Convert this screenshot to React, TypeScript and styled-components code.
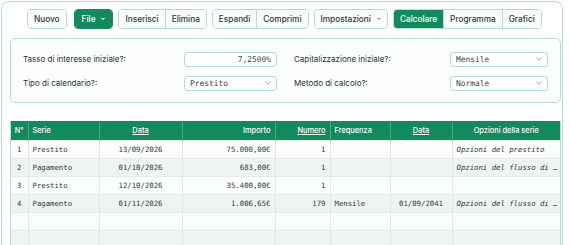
import React from 'react';
import styled, { createGlobalStyle } from 'styled-components';

const GlobalStyle = createGlobalStyle`
  html, body {
    margin: 0;
    padding: 0;
    background: #ffffff;
    font-family: Inter, "Noto Sans", sans-serif;
    color: #26352e;
  }
`;

const GREEN = '#138a5e';
const LINE = '#b7dccd';
const MONO = '"DejaVu Sans Mono", "Liberation Mono", monospace';

const Card = styled.div`
  margin: 1px 0 0 1px;
  width: 562px;
  height: 260px;
  border: 1px solid ${LINE};
  border-radius: 8px;
  background: #ffffff;
  padding: 7px 2px 0 8px;
  box-sizing: border-box;
  overflow: hidden;
`;

const Toolbar = styled.div`
  display: flex;
  align-items: center;
  gap: 5px;
  padding-left: 17px;
  height: 20px;
`;

const Group = styled.div<{ $green?: boolean }>`
  display: flex;
  height: 20px;
  border: 1px solid ${(p) => (p.$green ? GREEN : LINE)};
  border-radius: 4px;
  overflow: hidden;
  box-sizing: border-box;
`;

const Btn = styled.button<{ $active?: boolean }>`
  display: flex;
  align-items: center;
  gap: 6px;
  height: 100%;
  padding: 0 6px;
  border: none;
  border-left: 1px solid ${LINE};
  background: ${(p) => (p.$active ? GREEN : '#fafcfb')};
  color: ${(p) => (p.$active ? '#ffffff' : '#2b3a33')};
  font-family: Inter, "Noto Sans", sans-serif;
  font-size: 8.25px;
  font-weight: 500;
  cursor: pointer;
  &:first-child {
    border-left: none;
  }
`;

const Caret = styled.span<{ $light?: boolean }>`
  width: 0;
  height: 0;
  border-left: 2px solid transparent;
  border-right: 2px solid transparent;
  border-top: 2.5px solid ${(p) => (p.$light ? '#ffffff' : '#8a9690')};
`;

const Settings = styled.div`
  margin-top: 9px;
  width: 551px;
  box-sizing: border-box;
  border: 1px solid ${LINE};
  border-radius: 5px;
  background: #fcfdfd;
  padding: 12px 12px 11px 12px;
  display: grid;
  grid-template-columns: 1fr 1fr;
  column-gap: 17px;
  row-gap: 8px;
`;

const Field = styled.div`
  display: flex;
  align-items: center;
  justify-content: space-between;
  height: 16px;
`;

const Label = styled.span`
  font-size: 8px;
  color: #26352e;
`;

const Control = styled.div<{ $w: number; $right?: boolean }>`
  width: ${(p) => p.$w}px;
  height: 15px;
  box-sizing: border-box;
  border: 1px solid ${LINE};
  border-radius: 3px;
  background: #ffffff;
  display: flex;
  align-items: center;
  justify-content: ${(p) => (p.$right ? 'flex-end' : 'space-between')};
  padding: 0 5px;
  font-family: ${MONO};
  font-size: 7.9px;
  color: #35443d;
`;

const Chevron = () => (
  <svg width="6" height="4" viewBox="0 0 6 4">
    <path d="M0.5 0.8 L3 3.2 L5.5 0.8" fill="none" stroke="#8a9690" strokeWidth="0.8" />
  </svg>
);

const TableWrap = styled.div`
  margin-top: 18px;
  width: 551px;
  border-left: 1px solid ${LINE};
  border-right: 1px solid ${LINE};
  box-sizing: border-box;
`;

const Table = styled.table`
  width: 100%;
  border-collapse: collapse;
  table-layout: fixed;
`;

type Align = 'left' | 'center' | 'right';

const Th = styled.th<{ $align?: Align; $link?: boolean }>`
  background: ${GREEN};
  color: #ffffff;
  height: 19px;
  padding: 0 4px;
  font-family: Inter, "Noto Sans", sans-serif;
  font-size: 7.4px;
  font-weight: 500;
  text-align: ${(p) => p.$align || 'left'};
  text-decoration: ${(p) => (p.$link ? 'underline' : 'none')};
  border-left: 1px solid #4aa883;
  white-space: nowrap;
  &:first-child {
    border-left: none;
  }
`;

const Tr = styled.tr<{ $alt?: boolean }>`
  background: ${(p) => (p.$alt ? '#eef4f1' : '#fbfcfc')};
`;

const Td = styled.td<{ $align?: Align; $italic?: boolean }>`
  height: 17px;
  padding: 0 4px;
  font-family: ${MONO};
  font-size: 7.3px;
  color: #2b3a33;
  text-align: ${(p) => p.$align || 'left'};
  font-style: ${(p) => (p.$italic ? 'italic' : 'normal')};
  border-left: 1px solid #dfe9e5;
  border-top: 1px solid #e2ebe7;
  white-space: nowrap;
  overflow: hidden;
  &:first-child {
    border-left: none;
  }
`;

const rows = [
  { n: '1', serie: 'Prestito', data: '13/09/2026', imp: '75.000,00€', num: '1', freq: '', fine: '', opz: 'Opzioni del prestito' },
  { n: '2', serie: 'Pagamento', data: '01/10/2026', imp: '683,00€', num: '1', freq: '', fine: '', opz: 'Opzioni del flusso di …' },
  { n: '3', serie: 'Prestito', data: '12/10/2026', imp: '35.400,00€', num: '1', freq: '', fine: '', opz: '' },
  { n: '4', serie: 'Pagamento', data: '01/11/2026', imp: '1.006,65€', num: '179', freq: 'Mensile', fine: '01/09/2041', opz: 'Opzioni del flusso di …' },
  { n: '', serie: '', data: '', imp: '', num: '', freq: '', fine: '', opz: '' },
  { n: '', serie: '', data: '', imp: '', num: '', freq: '', fine: '', opz: '' },
];

const App = () => {
  return (
    <>
      <GlobalStyle />
      <Card>
        <Toolbar>
          <Group style={{ marginRight: 2 }}>
            <Btn>Nuovo</Btn>
          </Group>
          <Group $green>
            <Btn $active style={{ padding: '0 7px' }}>
              File <Caret $light />
            </Btn>
          </Group>
          <Group>
            <Btn>Inserisci</Btn>
            <Btn>Elimina</Btn>
          </Group>
          <Group>
            <Btn>Espandi</Btn>
            <Btn>Comprimi</Btn>
          </Group>
          <Group>
            <Btn>
              Impostazioni <Caret />
            </Btn>
          </Group>
          <Group>
            <Btn $active>Calcolare</Btn>
            <Btn>Programma</Btn>
            <Btn>Grafici</Btn>
          </Group>
        </Toolbar>

        <Settings>
          <Field>
            <Label>Tasso di interesse iniziale?:</Label>
            <Control $w={93} $right>7,2500%</Control>
          </Field>
          <Field>
            <Label>Capitalizzazione iniziale?:</Label>
            <Control $w={98}>
              Mensile <Chevron />
            </Control>
          </Field>
          <Field>
            <Label>Tipo di calendario?:</Label>
            <Control $w={93}>
              Prestito <Chevron />
            </Control>
          </Field>
          <Field>
            <Label>Metodo di calcolo?:</Label>
            <Control $w={98}>
              Normale <Chevron />
            </Control>
          </Field>
        </Settings>

        <TableWrap>
          <Table>
            <colgroup>
              <col style={{ width: 17 }} />
              <col style={{ width: 71 }} />
              <col style={{ width: 83 }} />
              <col style={{ width: 93 }} />
              <col style={{ width: 55 }} />
              <col style={{ width: 60 }} />
              <col style={{ width: 62 }} />
              <col />
            </colgroup>
            <thead>
              <tr>
                <Th $align="center" style={{ padding: 0 }}>N°</Th>
                <Th>Serie</Th>
                <Th $align="center" $link>Data</Th>
                <Th $align="right">Importo</Th>
                <Th $align="right" $link>Numero</Th>
                <Th>Frequenza</Th>
                <Th $align="center" $link>Data</Th>
                <Th $align="center">Opzioni della serie</Th>
              </tr>
            </thead>
            <tbody>
              {rows.map((r, i) => (
                <Tr key={i} $alt={i % 2 === 1}>
                  <Td $align="center" style={{ padding: 0 }}>{r.n}</Td>
                  <Td>{r.serie}</Td>
                  <Td $align="center">{r.data}</Td>
                  <Td $align="right">{r.imp}</Td>
                  <Td $align="right">{r.num}</Td>
                  <Td>{r.freq}</Td>
                  <Td $align="center">{r.fine}</Td>
                  <Td $italic>{r.opz}</Td>
                </Tr>
              ))}
            </tbody>
          </Table>
        </TableWrap>
      </Card>
    </>
  );
};

export default App;
